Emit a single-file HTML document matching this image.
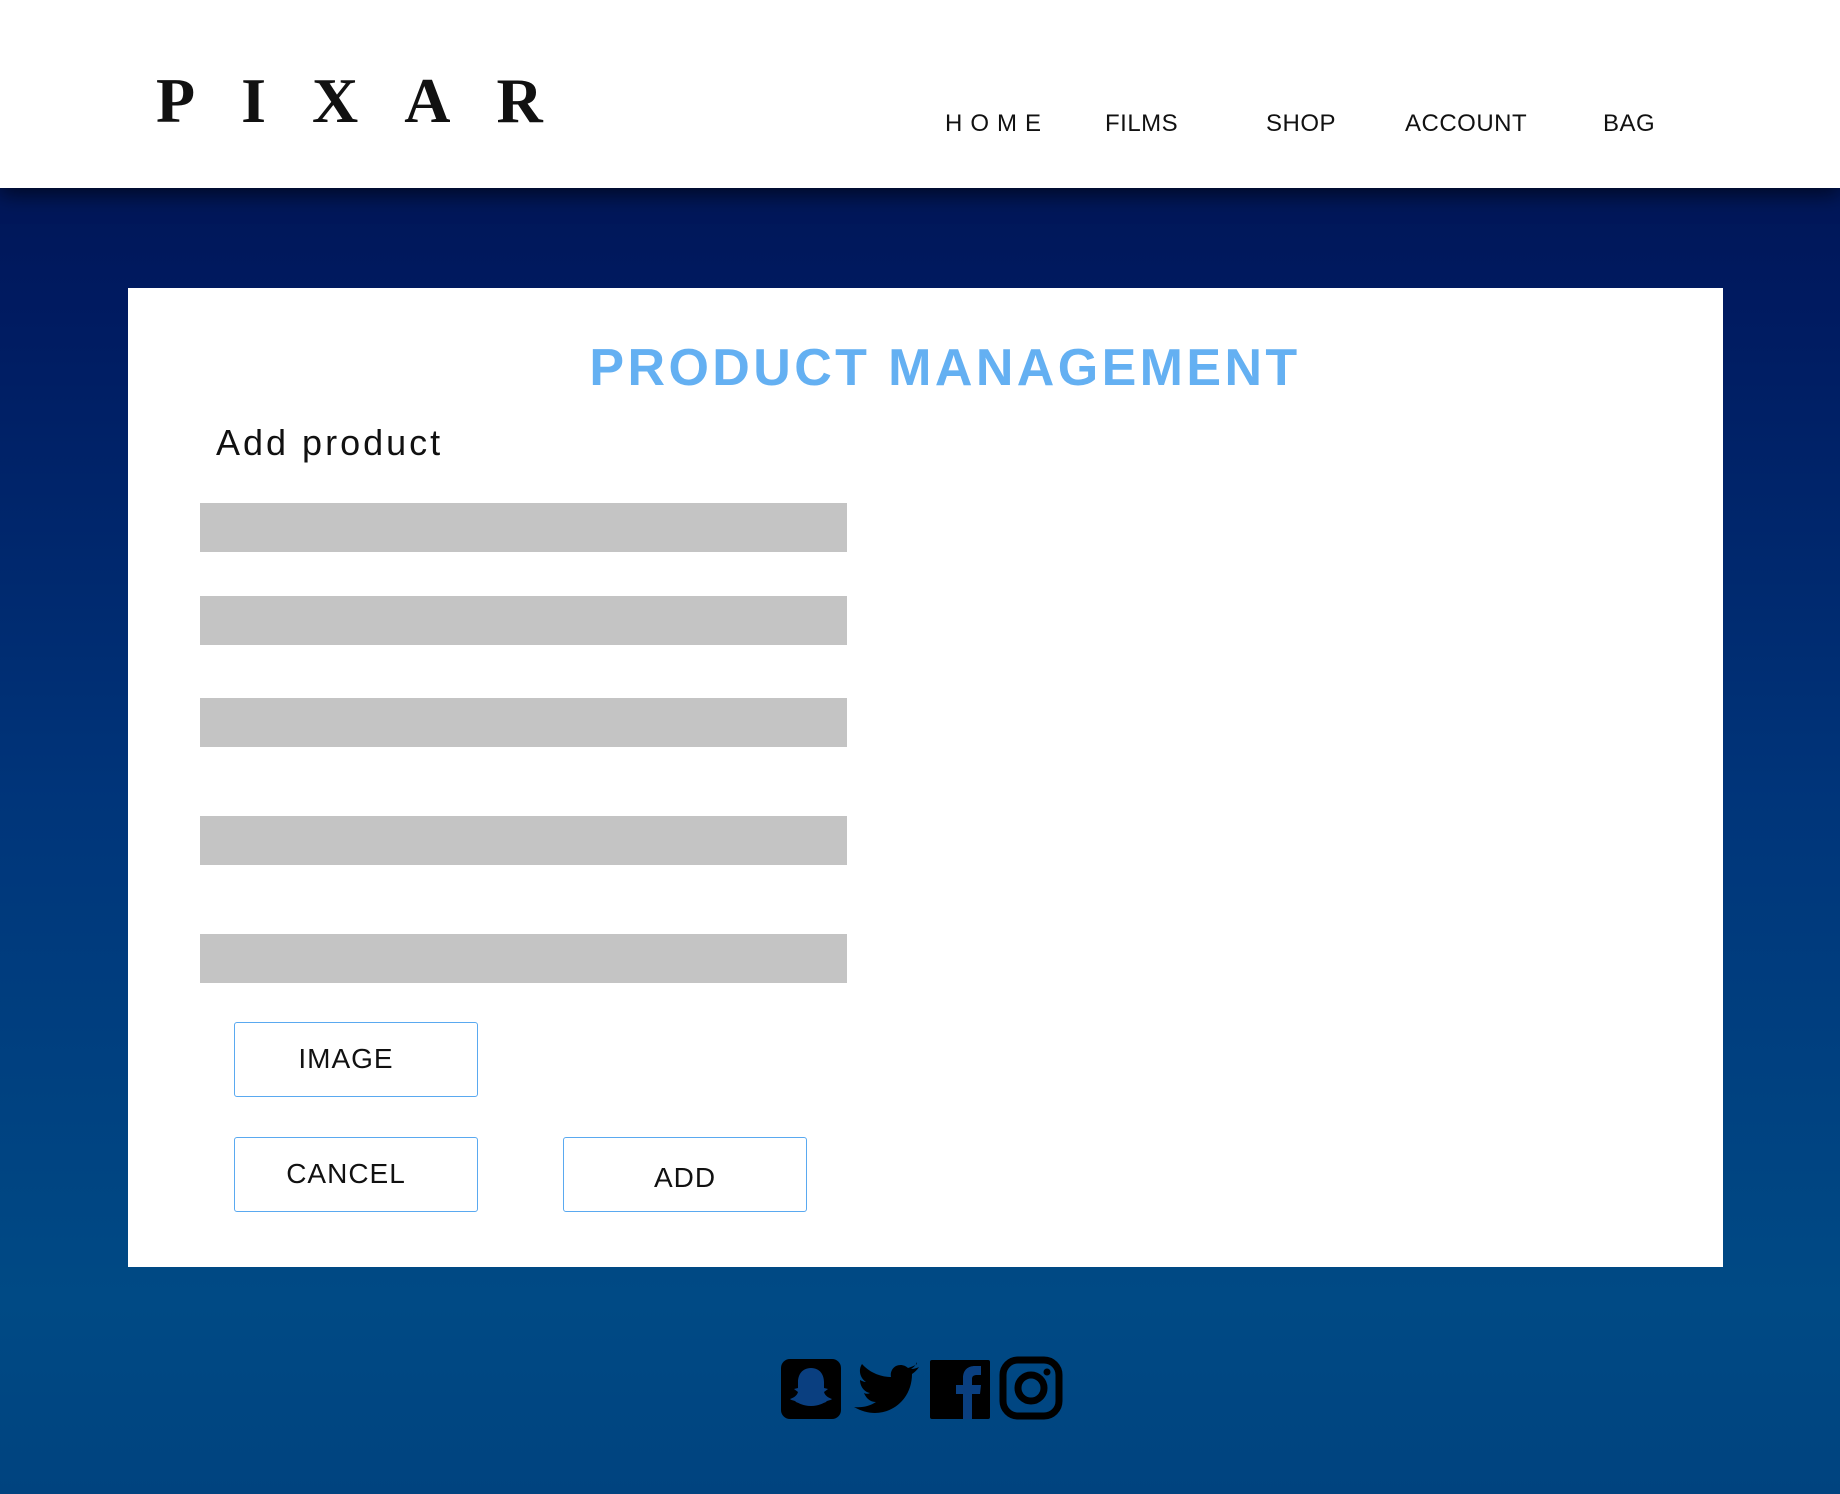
<!DOCTYPE html>
<html><head><meta charset="utf-8"><style>
*{margin:0;padding:0;box-sizing:border-box}
body{width:1840px;height:1494px;overflow:hidden;font-family:"Liberation Sans",sans-serif;background:linear-gradient(180deg,#00104a 0px,#001a60 300px,#00357a 800px,#004a85 1300px,#00437f 1494px);position:relative}
.hdr{position:absolute;left:0;top:0;width:1840px;height:188px;background:#fff;box-shadow:0 6px 20px rgba(0,0,0,.6)}
.logo{position:absolute;left:156px;top:64px;font-family:"Liberation Serif",serif;font-weight:bold;font-size:64px;letter-spacing:46px;color:#111}
.nav{position:absolute;top:110px;font-size:24px;color:#111;letter-spacing:.5px}
.card{position:absolute;left:128px;top:288px;width:1595px;height:979px;background:#fff}
.title{position:absolute;left:0;width:100%;top:338px;text-align:center;font-weight:bold;font-size:52px;letter-spacing:3.4px;color:#64b0f2;padding-left:50px}
.sub{position:absolute;left:216px;top:422px;font-size:36px;letter-spacing:3px;color:#111}
.inp{position:absolute;left:200px;width:647px;height:49px;background:#c4c4c4}
.btn{position:absolute;width:244px;height:75px;border:1.5px solid #5aa9f0;border-radius:3px;background:#fff;font-size:28px;text-align:center;line-height:72px;color:#111;letter-spacing:1px}
</style></head><body>
<div class="hdr">
<div class="logo">PIXAR</div>
<div class="nav" style="left:945px;letter-spacing:8px">HOME</div>
<div class="nav" style="left:1105px">FILMS</div>
<div class="nav" style="left:1266px">SHOP</div>
<div class="nav" style="left:1405px">ACCOUNT</div>
<div class="nav" style="left:1603px">BAG</div>
</div>
<div class="card"></div>
<div class="title">PRODUCT MANAGEMENT</div>
<div class="sub">Add product</div>
<div class="inp" style="top:503px"></div>
<div class="inp" style="top:596px"></div>
<div class="inp" style="top:698px"></div>
<div class="inp" style="top:816px"></div>
<div class="inp" style="top:934px"></div>
<div class="btn" style="left:234px;top:1022px;padding-right:20px">IMAGE</div>
<div class="btn" style="left:234px;top:1137px;padding-right:20px">CANCEL</div>
<div class="btn" style="left:563px;top:1137px;line-height:80px">ADD</div>
<svg style="position:absolute;left:781px;top:1356px" width="284" height="64" viewBox="0 0 284 64">
<rect x="0" y="3" width="60" height="60" rx="9" fill="#000"/>
<path d="M30 12c-9 0-13 7-13 14v6l-4 1 4 3c-1 4-5 6-8 7 2 2 5 1 6 3 3 1 7 4 15 4s12-3 15-4c1-2 4-1 6-3-3-1-7-3-8-7l4-3-4-1v-6c0-7-4-14-13-14z" fill="#0a3f80"/>
<path d="M136 8c-3 2-6 3-9 4-3-3-8-4-12-2-4 2-6 7-5 11-11 0-22-5-29-13-4 6-2 14 4 18-2 0-4-1-6-2 0 6 4 12 10 13-2 1-4 1-6 0 2 5 6 9 12 9-6 4-14 6-22 5 27 16 58-2 58-33 3-2 5-4 7-7-2 1-5 2-8 2 3-2 5-4 6-7z" fill="#000"/>
<rect x="149" y="4" width="60" height="59" rx="2" fill="#000"/>
<path d="M182 63V38h-7v-9h7v-7c0-8 5-12 12-12h6v9h-4c-3 0-5 1-5 4v6h9l-1 9h-8v25z" fill="#0a3f80"/>
<rect x="222" y="4" width="56" height="56" rx="15" fill="none" stroke="#000" stroke-width="7"/>
<circle cx="250" cy="32" r="13" fill="none" stroke="#000" stroke-width="7"/>
<circle cx="266" cy="16" r="3.5" fill="#000"/>
</svg>
</body></html>
